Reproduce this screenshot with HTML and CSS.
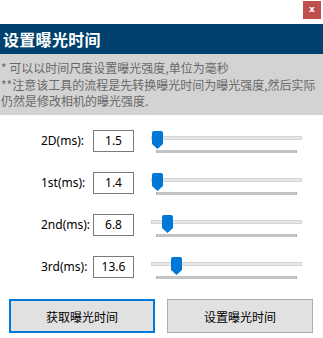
FILE: index.html
```html
<!DOCTYPE html>
<html lang="zh">
<head>
<meta charset="utf-8">
<link rel="stylesheet" href="styles.css">
</head>
<body>
<div class="topbar"><div class="close">x</div></div>
<div class="title">设置曝光时间</div>
<div class="notes">* 可以以时间尺度设置曝光强度,单位为毫秒<br>**注意该工具的流程是先转换曝光时间为曝光强度,然后实际<br>仍然是修改相机的曝光强度.</div>
<div class="rows">
  <div class="row">
    <div class="label">2D(ms):</div>
    <div class="box">1.5</div>
    <div class="slider"><div class="track"></div><div class="ticks"></div><svg class="thumb" style="left:1px" width="11" height="18" viewBox="0 0 11 18"><path d="M0 2Q0 0 2 0H9Q11 0 11 2V13L5.5 18L0 13Z" fill="#0078d7"/></svg></div>
  </div>
  <div class="row">
    <div class="label">1st(ms):</div>
    <div class="box">1.4</div>
    <div class="slider"><div class="track"></div><div class="ticks"></div><svg class="thumb" style="left:1px" width="11" height="18" viewBox="0 0 11 18"><path d="M0 2Q0 0 2 0H9Q11 0 11 2V13L5.5 18L0 13Z" fill="#0078d7"/></svg></div>
  </div>
  <div class="row">
    <div class="label">2nd(ms):</div>
    <div class="box">6.8</div>
    <div class="slider"><div class="track"></div><div class="ticks"></div><svg class="thumb" style="left:11px" width="11" height="18" viewBox="0 0 11 18"><path d="M0 2Q0 0 2 0H9Q11 0 11 2V13L5.5 18L0 13Z" fill="#0078d7"/></svg></div>
  </div>
  <div class="row">
    <div class="label">3rd(ms):</div>
    <div class="box">13.6</div>
    <div class="slider"><div class="track"></div><div class="ticks"></div><svg class="thumb" style="left:20px" width="11" height="18" viewBox="0 0 11 18"><path d="M0 2Q0 0 2 0H9Q11 0 11 2V13L5.5 18L0 13Z" fill="#0078d7"/></svg></div>
  </div>
</div>
<div class="buttons">
  <div class="btn primary">获取曝光时间</div>
  <div class="btn">设置曝光时间</div>
</div>
</body>
</html>
```
FILE: styles.css
```css
* { box-sizing: border-box; }
html, body { margin: 0; padding: 0; background: #fff; }
body {
  width: 323px;
  height: 338px;
  overflow: hidden;
  font-family: "Noto Sans", "Noto Sans CJK SC", sans-serif;
  font-size: 12px;
  color: #000;
}
.topbar {
  height: 24px;
  display: flex;
  justify-content: flex-end;
  padding: 1px 2px 0 0;
}
.close {
  width: 18px;
  height: 18px;
  background: #c0504d;
  color: #fff;
  font-family: "DejaVu Sans", sans-serif;
  font-weight: bold;
  font-size: 9px;
  line-height: 17px;
  text-align: center;
}
.title {
  height: 30px;
  background: #00416e;
  color: #fff;
  font-family: "Noto Sans CJK SC", sans-serif;
  font-weight: bold;
  font-size: 16px;
  line-height: 30px;
  padding-left: 3px;
  letter-spacing: 0.3px;
}
.notes {
  height: 61px;
  background: #d3d3d3;
  color: #696969;
  font-family: "Noto Sans CJK SC", sans-serif;
  font-size: 12px;
  line-height: 16.5px;
  padding: 6px 0 0 1px;
  white-space: nowrap;
}
.rows {
  padding: 15px 0 0 41px;
  display: flex;
  flex-direction: column;
  gap: 20px;
}
.row {
  display: flex;
  align-items: flex-start;
  height: 22px;
}
.label {
  width: 52px;
  line-height: 22px;
  font-size: 12px;
}
.box {
  width: 41px;
  height: 22px;
  border: 1px solid #7a7a7a;
  text-align: center;
  line-height: 20px;
  font-size: 12px;
}
.slider {
  position: relative;
  width: 151px;
  height: 22px;
  margin-left: 17px;
}
.track {
  margin-top: 6px;
  height: 4px;
  background: #e7e7e7;
  border: 1px solid #d6d6d6;
}
.ticks {
  margin: 10px 0 0 5px;
  width: 141px;
  height: 3px;
  background: #c4c4c4;
  border-left: 1px solid #b0b0b0;
  border-right: 1px solid #b0b0b0;
}
.thumb {
  position: absolute;
  top: 1px;
  display: block;
}
.buttons {
  display: flex;
  gap: 12px;
  padding: 21px 0 0 9px;
}
.btn {
  width: 146px;
  height: 34px;
  background: #e1e1e1;
  border: 1px solid #adadad;
  display: flex;
  align-items: center;
  justify-content: center;
  font-family: "Noto Sans CJK SC", sans-serif;
  font-size: 12px;
}
.btn.primary {
  border: 2px solid #0078d7;
}
```
